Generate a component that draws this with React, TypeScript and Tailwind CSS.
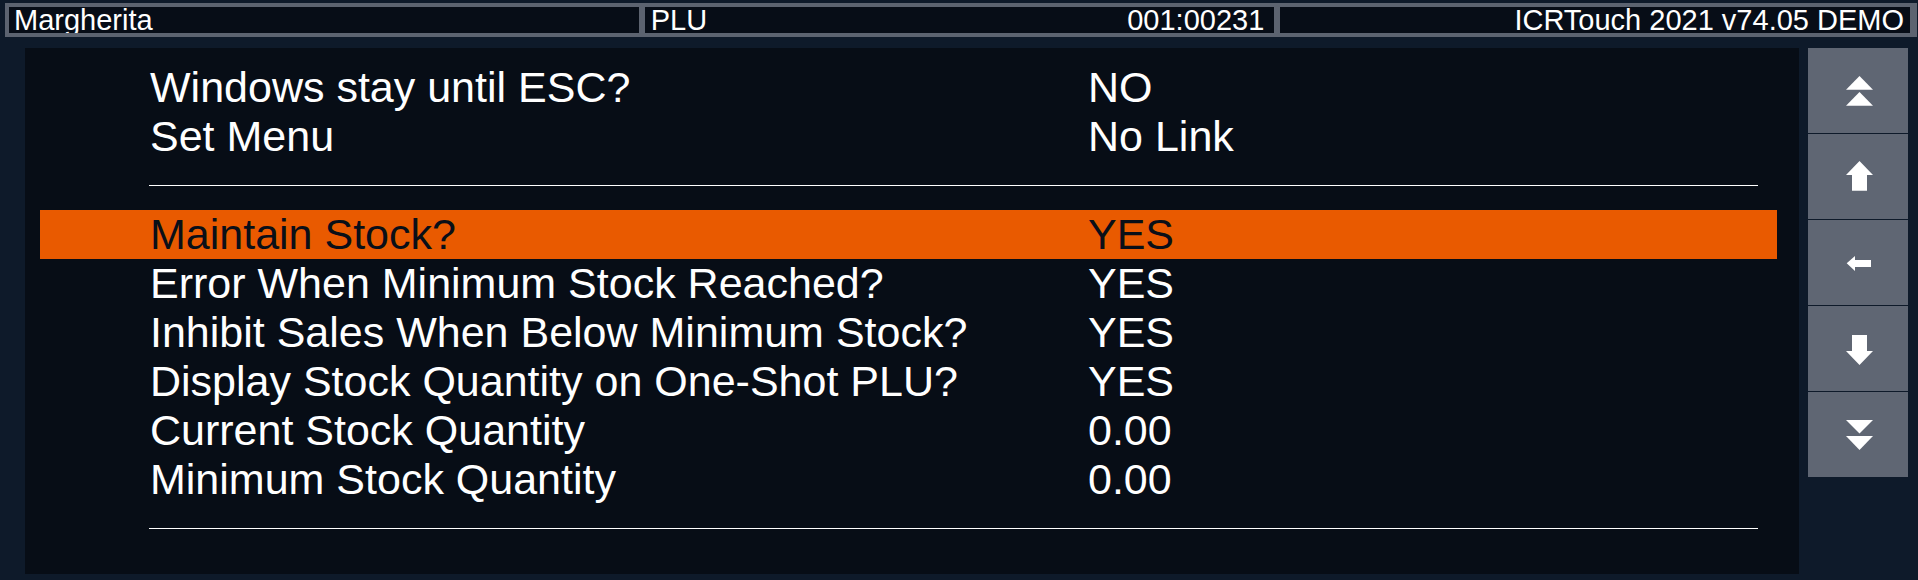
import React from "react";

const font = { fontFamily: '"Liberation Sans", Arial, sans-serif' };

type Row = { label: string; value: string; active?: boolean };

const group1: Row[] = [
  { label: "Windows stay until ESC?", value: "NO" },
  { label: "Set Menu", value: "No Link" },
];

const group2: Row[] = [
  { label: "Maintain Stock?", value: "YES", active: true },
  { label: "Error When Minimum Stock Reached?", value: "YES" },
  { label: "Inhibit Sales When Below Minimum Stock?", value: "YES" },
  { label: "Display Stock Quantity on One-Shot PLU?", value: "YES" },
  { label: "Current Stock Quantity", value: "0.00" },
  { label: "Minimum Stock Quantity", value: "0.00" },
];

function RowView({ r }: { r: Row }) {
  return (
    <div
      className={
        "ml-[15px] mr-[22px] h-[49px] flex items-center whitespace-nowrap text-[43px] leading-[49px] " +
        (r.active ? "bg-[#e95a00] text-[#0a0f18]" : "text-white")
      }
    >
      <div className="w-[1048px] pl-[110px]">{r.label}</div>
      <div>{r.value}</div>
    </div>
  );
}

function Btn({ children }: { children: React.ReactNode }) {
  return (
    <div className="h-[85px] w-[100px] bg-[#5f6673]">
      <svg width="100" height="85" viewBox="0 0 100 85" className="block">
        {children}
      </svg>
    </div>
  );
}

export default function App() {
  return (
    <div
      className="w-[1918px] h-[580px] bg-[#0e1a2a] overflow-hidden"
      style={font}
    >
      {/* top status bar */}
      <div className="pt-[3px] pl-[5px] pr-[1px]">
        <div className="h-[34px] bg-[#5c6370] pt-[4px] pb-[4px] pl-[4px] pr-[7px] grid grid-cols-3 gap-[6px]">
          <div className="bg-[#070d17] text-white text-[29px] leading-[26px] pl-[5px] overflow-hidden whitespace-nowrap">
            Margherita
          </div>
          <div className="bg-[#070d17] text-white text-[29px] leading-[26px] pl-[6px] pr-[10px] overflow-hidden whitespace-nowrap flex justify-between">
            <span>PLU</span>
            <span>001:00231</span>
          </div>
          <div className="bg-[#070d17] text-white text-[29px] leading-[26px] pr-[6px] overflow-hidden whitespace-nowrap text-right">
            ICRTouch 2021 v74.05 DEMO
          </div>
        </div>
      </div>

      {/* main area */}
      <div className="mt-[11px] flex">
        <div className="ml-[25px] w-[1774px] h-[526px] bg-[#070d16] pt-[15px]">
          {group1.map((r) => (
            <RowView key={r.label} r={r} />
          ))}
          <div className="ml-[124px] w-[1609px] h-px bg-white mt-[24px] mb-[24px]" />
          {group2.map((r) => (
            <RowView key={r.label} r={r} />
          ))}
          <div className="ml-[124px] w-[1609px] h-px bg-white mt-[24px]" />
        </div>

        <div className="ml-[9px] flex flex-col gap-px">
          <Btn>
            <polygon points="51.5,28 38,41.7 65,41.7" fill="white" />
            <polygon points="51.5,44 38,57.7 65,57.7" fill="white" />
          </Btn>
          <Btn>
            <polygon points="51.5,27 38,41 44,41 44,56.7 59,56.7 59,41 65,41" fill="white" />
          </Btn>
          <Btn>
            <polygon points="38.7,43.3 47,36 47,40 63,40 63,47 47,47 47,51" fill="white" />
          </Btn>
          <Btn>
            <polygon points="44,29 59,29 59,45 65,45 51.5,59 38,45 44,45" fill="white" />
          </Btn>
          <Btn>
            <polygon points="38,28 65,28 51.5,41.5" fill="white" />
            <polygon points="38,44 65,44 51.5,58" fill="white" />
          </Btn>
        </div>
      </div>
    </div>
  );
}
